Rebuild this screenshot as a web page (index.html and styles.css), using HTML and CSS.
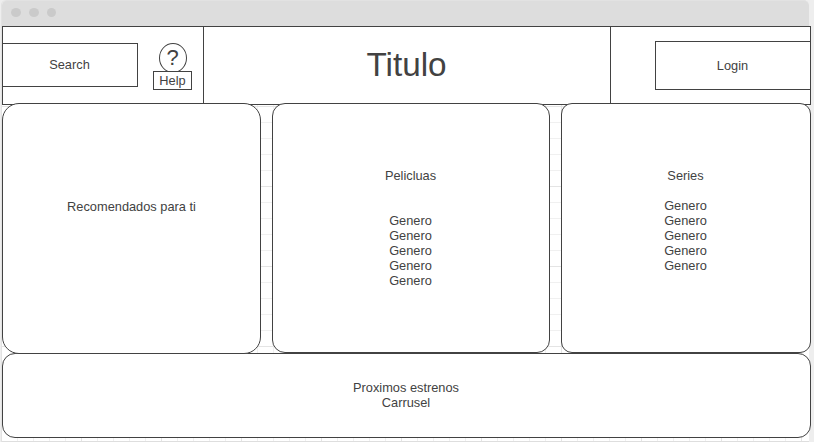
FILE: index.html
```
<!DOCTYPE html>
<html lang="es">
<head>
<meta charset="utf-8">
<title>Titulo</title>
<link rel="stylesheet" href="styles.css">
</head>
<body>
<div class="window">
  <div class="titlebar"><i class="dot"></i><i class="dot"></i><i class="dot"></i></div>
  <div class="content">
    <header class="header">
      <div class="tools">
        <div class="box search">Search</div>
        <div class="help">
          <div class="help-icon">?</div>
          <div class="help-label">Help</div>
        </div>
      </div>
      <h1 class="title">Titulo</h1>
      <div class="account"><div class="box login">Login</div></div>
    </header>
    <main class="panels">
      <section class="panel recommended"><p>Recomendados para ti</p></section>
      <section class="panel movies">
        <p>Pelicluas</p>
        <ul><li>Genero</li><li>Genero</li><li>Genero</li><li>Genero</li><li>Genero</li></ul>
      </section>
      <section class="panel series">
        <p>Series</p>
        <ul><li>Genero</li><li>Genero</li><li>Genero</li><li>Genero</li><li>Genero</li></ul>
      </section>
    </main>
    <footer class="upcoming"><p>Proximos estrenos</p><p>Carrusel</p></footer>
  </div>
</div>
</body>
</html>
```
FILE: styles.css
```
* { box-sizing: border-box; margin: 0; padding: 0; }
body {
  width: 814px;
  height: 442px;
  overflow: hidden;
  background: #eeeeee;
  color: #424242;
  font: 12.8px/15px "Liberation Sans", Arial, sans-serif;
  text-align: center;
}
.window {
  width: 807px;
  height: 442px;
  margin-left: 2px;
  border-radius: 5px 5px 0 0;
  border-bottom: 1px solid #dedede;
  box-shadow: -1px 0 0 #e2e2e2;
  background-color: #fff;
  background-image:
    linear-gradient(#e4e4e4 1px, transparent 1px),
    linear-gradient(90deg, #e4e4e4 1px, transparent 1px),
    linear-gradient(#f0f0f0 1px, transparent 1px),
    linear-gradient(90deg, #f0f0f0 1px, transparent 1px);
  background-size: 80px 80px, 80px 80px, 16px 16px, 16px 16px;
  background-position: 0 26px, 79px 0, 0 10px, 15px 0;
}
.titlebar {
  display: flex;
  gap: 8px;
  height: 26px;
  padding: 8px 9px;
  border-radius: 5px 5px 0 0;
  border-top: 1px solid #e2e2e2;
  background: #dddddd;
}
.dot {
  width: 10px;
  height: 9px;
  margin-top: -1px;
  border-radius: 50%;
  background: #cacaca;
}
.dot:last-child { width: 9px; }
.content { width: 809px; }
.header {
  display: flex;
  height: 79px;
  border: 1px solid #424242;
  background: #fff;
}
.tools {
  display: flex;
  align-items: flex-start;
  width: 201px;
  padding-top: 16px;
  border-right: 1px solid #424242;
}
.box {
  display: flex;
  align-items: center;
  justify-content: center;
  padding-right: 1px;
  border: 1px solid #424242;
}
.search {
  width: 136px;
  height: 44px;
  margin-left: -1px;
  padding-bottom: 1px;
}
.help {
  display: flex;
  flex-direction: column;
  align-items: center;
  width: 39px;
  margin-left: 15px;
}
.help-icon {
  width: 28px;
  height: 30px;
  border: 1px solid #424242;
  border-radius: 50%;
  font-size: 22px;
  line-height: 28px;
}
.help-label {
  width: 39px;
  height: 19px;
  margin-top: -2px;
  border: 1px solid #424242;
  background: #fff;
  line-height: 18px;
  z-index: 1;
}
.title {
  width: 406px;
  padding-right: 1px;
  font-size: 33.3px;
  font-weight: 400;
  line-height: 76px;
}
.account {
  flex: 1;
  display: flex;
  justify-content: flex-end;
  padding-top: 14px;
  border-left: 1px solid #424242;
}
.login {
  width: 156px;
  height: 49px;
  margin-right: -1px;
}
.panels {
  display: flex;
  align-items: flex-start;
  justify-content: space-between;
  margin-top: -2px;
}
.panel {
  height: 250px;
  border: 1px solid #424242;
  background: #fff;
}
.panel li { list-style: none; }
.recommended {
  width: 259px;
  height: 251px;
  padding-top: 95px;
  border-radius: 17px;
}
.movies {
  width: 278px;
  padding: 64px 1px 0 0;
  border-radius: 13px;
}
.movies ul { margin-top: 30px; }
.series {
  width: 250px;
  padding: 64px 1px 0 0;
  border-radius: 11px;
}
.series ul { margin-top: 15px; }
.upcoming {
  height: 85px;
  margin-top: -1px;
  padding: 26px 1px 0 0;
  border: 1px solid #424242;
  border-radius: 13px;
  background: #fff;
}
```
